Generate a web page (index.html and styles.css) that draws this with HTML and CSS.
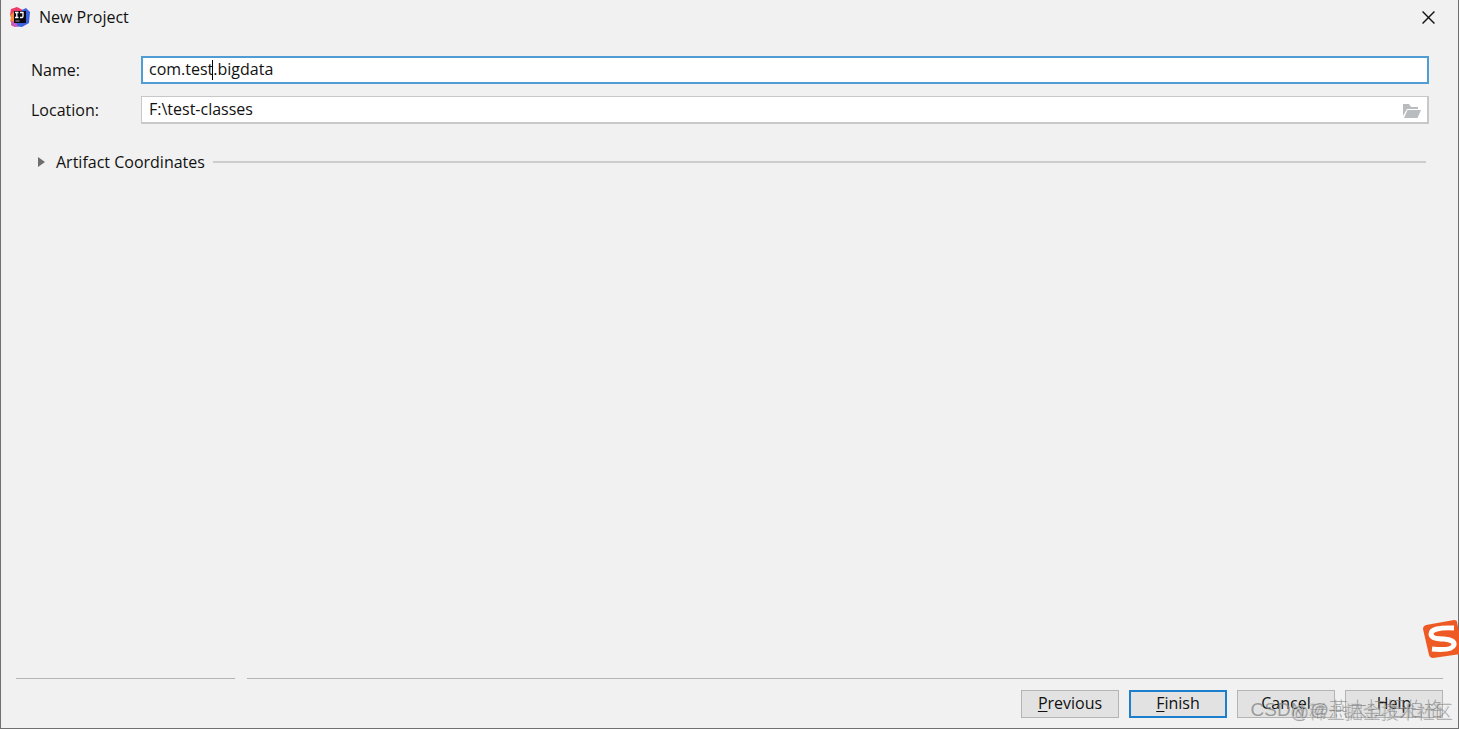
FILE: index.html
```html
<!DOCTYPE html>
<html lang="en">
<head>
  <meta charset="UTF-8" />
  <meta name="viewport" content="width=device-width, initial-scale=1.0"/>
  <title>New Project</title>
  <link rel="stylesheet" href="styles.css">
</head>
<body>
  <div class="dialog">
    <header class="titlebar">
      <svg class="app-icon" viewBox="0 0 20 20">
        <path d="M1 2 7 0l6 3 1 9-9 8-4-2 1-7-2-3z" fill="#ee3a68"/>
        <path d="M0 8l4-3 2 8-4 3-2-2 1-3z" fill="#f58a3c"/>
        <path d="M12 3l4-2 4 4-1 11-7 4-8-1z" fill="#3d62df"/>
        <path d="M1 14l5 1 2 5-6-1z" fill="#c85ac0"/>
        <path d="M4 4h12v12H4z" fill="#0b0710"/>
        <path d="M5 5.500h3.500M6.800 5.500v5M5 10.500h3.500M10 5.500h3v3.700q0 1.300-1.300 1.300H10" fill="none" stroke="#fff" stroke-width="1.300"/>
        <path d="M5.500 14h4" stroke="#aaa"/>
      </svg>
      <h1>New Project</h1>
      <button type="button" class="close-btn" aria-label="Close">
        <svg viewBox="0 0 12 12"><path d="M.5.5l11 11M11.500.5l-11 11" stroke="#111" stroke-width="1.300"/></svg>
      </button>
    </header>

    <form class="content" id="projectForm">
      <div class="row">
        <label for="name">Name:</label>
        <div class="field">
          <input type="text" id="name" class="active" value="com.test.bigdata" />
          <span class="caret"></span>
        </div>
      </div>
      <div class="row">
        <label for="location">Location:</label>
        <div class="field">
          <input type="text" id="location" value="F:\test-classes" />
          <button type="button" class="browse-btn" aria-label="Browse">
            <svg viewBox="0 0 18 14"><path d="M0 0h6l2 3h7v2H4L0 12z" fill="#b9bcbf"/><path d="M4.500 6H18l-3.500 8H1z" fill="#b9bcbf"/></svg>
          </button>
        </div>
      </div>
      <button type="button" class="section-toggle">
        <svg viewBox="0 0 7 10"><path d="M0 0l7 5-7 5z" fill="#6e6e6e"/></svg>
        <span>Artifact Coordinates</span>
      </button>
    </form>

    <div class="divider"><span class="line-left"></span><span class="line-right"></span></div>

    <footer class="buttons">
      <button type="button"><u>P</u>revious</button>
      <button type="submit" form="projectForm" class="default"><u>F</u>inish</button>
      <button type="button">Cancel</button>
      <button type="button">Help</button>
    </footer>
  </div>

  <div class="watermark csdn">CSDN @燕大扛把伯格</div>
  <div class="watermark juejin">@稀土掘金技术社区</div>
  <svg class="ime" viewBox="0 0 36 38">
    <path d="M3 5 31 0q3 0 3 2l6 29q0 3-2 3L10 38q-3 0-4-3L0 9q0-3 3-4z" fill="#ee5a24"/>
    <path d="M31 8Q8 7 8 14q0 5 13 5 11 1 10 6-2 6-22 4" fill="none" stroke="#fff" stroke-width="5"/>
  </svg>
</body>
</html>
```
FILE: styles.css
```css
* {
  box-sizing: border-box;
}
body {
  margin: 0;
  overflow: hidden;
  font-family: "Open Sans", "Noto Sans CJK SC", sans-serif;
  font-size: 16px;
  line-height: 20px;
  color: #111;
}
button, input {
  font: inherit;
  color: inherit;
}
.dialog {
  display: flex;
  flex-direction: column;
  min-height: 100vh;
  background: #f1f1f1;
  border: 1px solid #707070;
  border-top: none;
}
.titlebar {
  display: flex;
  align-items: center;
  height: 34px;
  padding: 0 23px 0 9px;
}
.app-icon {
  width: 20px;
  height: 20px;
}
h1 {
  flex: 1;
  margin: 0 0 0 9px;
  font-size: 16px;
  font-weight: normal;
}
.close-btn {
  display: flex;
  padding: 0;
  border: none;
  background: none;
}
.close-btn svg {
  width: 13px;
  height: 13px;
}
.content {
  flex: 1;
  padding: 22px 29px 0 30px;
}
.row {
  display: flex;
  align-items: center;
  margin-bottom: 12px;
}
.row label {
  width: 110px;
}
.field {
  position: relative;
  flex: 1;
}
.field input {
  display: block;
  width: 100%;
  height: 28px;
  padding: 0 36px 2px 7px;
  border: 2px solid #c8c8c8;
  border-width: 1px 2px 2px 1px;
  background: #fff;
  outline: none;
}
.field .active {
  border: 2px solid #4f9dd3;
  padding-left: 6px;
}
/* text cursor */
.caret {
  position: absolute;
  left: 71px;
  top: 4px;
  width: 1px;
  height: 20px;
  background: #000;
}
.browse-btn {
  position: absolute;
  right: 8px;
  top: 8px;
  display: flex;
  padding: 0;
  border: none;
  background: none;
}
.browse-btn svg {
  width: 18px;
  height: 14px;
}
.section-toggle {
  display: flex;
  align-items: center;
  width: 100%;
  margin-top: 28px;
  padding: 0 3px 0 7px;
  border: none;
  background: none;
}
.section-toggle svg {
  width: 7px;
  height: 10px;
  margin-right: 11px;
}
.section-toggle::after {
  content: "";
  flex: 1;
  height: 2px;
  margin-left: 8px;
  background: #cdcdcd;
}
.divider {
  display: flex;
  gap: 12px;
  padding: 0 15px;
}
.line-left, .line-right {
  height: 1px;
  background: #b4b4b4;
}
.line-left {
  width: 219px;
}
.line-right {
  flex: 1;
}
.buttons {
  display: flex;
  justify-content: flex-end;
  gap: 10px;
  padding: 11px 15px 10px;
}
.buttons button {
  width: 98px;
  height: 28px;
  padding: 0 0 2px;
  border: 1px solid #b4b4b4;
  background: #e2e2e2;
}
.buttons .default {
  border: 2px solid #1c7fcb;
}
u {
  text-underline-offset: 2px;
}
.watermark {
  position: absolute;
  white-space: nowrap;
  pointer-events: none;
  font-family: "Liberation Sans", "Noto Sans CJK SC", sans-serif;
  font-weight: 300;
  color: rgba(130, 130, 130, 0.75);
}
.csdn {
  right: 16px;
  bottom: 9px;
  font-size: 19px;
}
.juejin {
  right: 7px;
  bottom: 7px;
  font-size: 18px;
  color: rgba(200, 200, 200, 0.6);
  text-shadow: 1px 1px 0 rgba(110, 110, 110, 0.6);
}
.ime {
  position: absolute;
  right: 0;
  bottom: 71px;
  width: 36px;
  height: 38px;
}
```
